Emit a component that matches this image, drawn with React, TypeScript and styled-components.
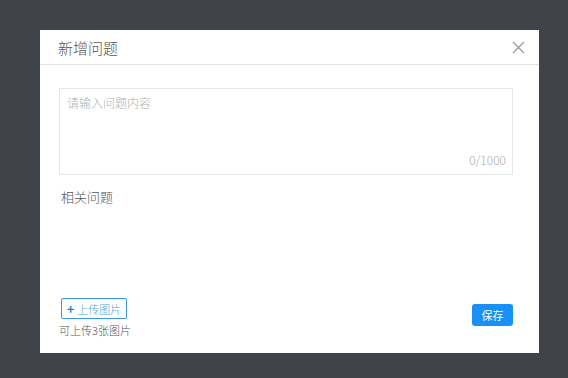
import styled, { createGlobalStyle } from "styled-components";

const GlobalStyle = createGlobalStyle`
  html, body {
    margin: 0;
    padding: 0;
    background: #404347;
    font-family: "Noto Sans CJK SC", "Noto Sans", "Liberation Sans", sans-serif;
  }
`;

const Overlay = styled.div`
  width: 568px;
  height: 378px;
  box-sizing: border-box;
  padding: 30px 0 0 40px;
  background: #404347;
`;

const Modal = styled.div`
  width: 499px;
  height: 323px;
  background: #fff;
  display: flex;
  flex-direction: column;
`;

const Header = styled.div`
  height: 34px;
  display: flex;
  align-items: center;
  justify-content: space-between;
  padding: 0 14px 0 18px;
  border-bottom: 1px solid #e3e3e3;
  flex-shrink: 0;
`;

const Title = styled.span`
  font-size: 15px;
  font-weight: 300;
  color: #555;
`;

const CloseButton = styled.button`
  border: none;
  background: none;
  padding: 0;
  width: 13px;
  height: 13px;
  display: flex;
  cursor: pointer;
`;

const Body = styled.div`
  flex: 1;
  display: flex;
  flex-direction: column;
  padding: 23px 26px 15px 19px;
`;

const TextBox = styled.div`
  position: relative;
  height: 87px;
  border: 1px solid #e6e6e6;
  box-sizing: border-box;
`;

const TextInput = styled.textarea`
  width: 100%;
  height: 100%;
  box-sizing: border-box;
  border: none;
  outline: none;
  resize: none;
  padding: 5px 7px;
  font-family: inherit;
  font-size: 12px;
  font-weight: 300;
  color: #333;
  background: transparent;

  &::placeholder {
    color: #b0b0b0;
  }
`;

const Counter = styled.span`
  position: absolute;
  right: 6px;
  bottom: 6px;
  font-size: 12px;
  font-weight: 300;
  color: #aaa;
`;

const Label = styled.div`
  margin: 13px 0 0 2px;
  font-size: 13px;
  font-weight: 300;
  line-height: 18px;
  color: #555;
`;

const Footer = styled.div`
  margin-top: auto;
  display: flex;
  justify-content: space-between;
  align-items: flex-start;
`;

const UploadColumn = styled.div`
  display: flex;
  flex-direction: column;
  align-items: flex-start;
`;

const UploadButton = styled.button`
  margin-left: 2px;
  width: 66px;
  height: 21px;
  box-sizing: border-box;
  border: 1px solid #3a97e0;
  border-radius: 2px;
  background: #fff;
  color: #4a9fe0;
  font-family: inherit;
  font-size: 11px;
  font-weight: 300;
  display: flex;
  align-items: center;
  justify-content: center;
  gap: 3px;
  padding: 0;
  cursor: pointer;
`;

const Plus = styled.span`
  font-size: 13px;
  font-weight: bold;
  line-height: 1;
  color: #1f7fd0;
`;

const Hint = styled.div`
  margin-top: 3px;
  font-size: 11px;
  font-weight: 300;
  line-height: 16px;
  color: #555;
`;

const SaveButton = styled.button`
  margin-top: 6px;
  width: 41px;
  height: 22px;
  border: none;
  border-radius: 3px;
  background: #1890f5;
  color: #fff;
  font-family: inherit;
  font-size: 11px;
  padding: 0;
  cursor: pointer;
`;

export default function App() {
  return (
    <>
      <GlobalStyle />
      <Overlay>
        <Modal>
          <Header>
            <Title>新增问题</Title>
            <CloseButton aria-label="close">
              <svg width="13" height="13" viewBox="0 0 13 13">
                <path d="M1 1 L12 12 M12 1 L1 12" stroke="#9a9a9a" strokeWidth="1.3" />
              </svg>
            </CloseButton>
          </Header>
          <Body>
            <TextBox>
              <TextInput placeholder="请输入问题内容" maxLength={1000} />
              <Counter>0/1000</Counter>
            </TextBox>
            <Label>相关问题</Label>
            <Footer>
              <UploadColumn>
                <UploadButton>
                  <Plus>+</Plus>
                  上传图片
                </UploadButton>
                <Hint>可上传3张图片</Hint>
              </UploadColumn>
              <SaveButton>保存</SaveButton>
            </Footer>
          </Body>
        </Modal>
      </Overlay>
    </>
  );
}
